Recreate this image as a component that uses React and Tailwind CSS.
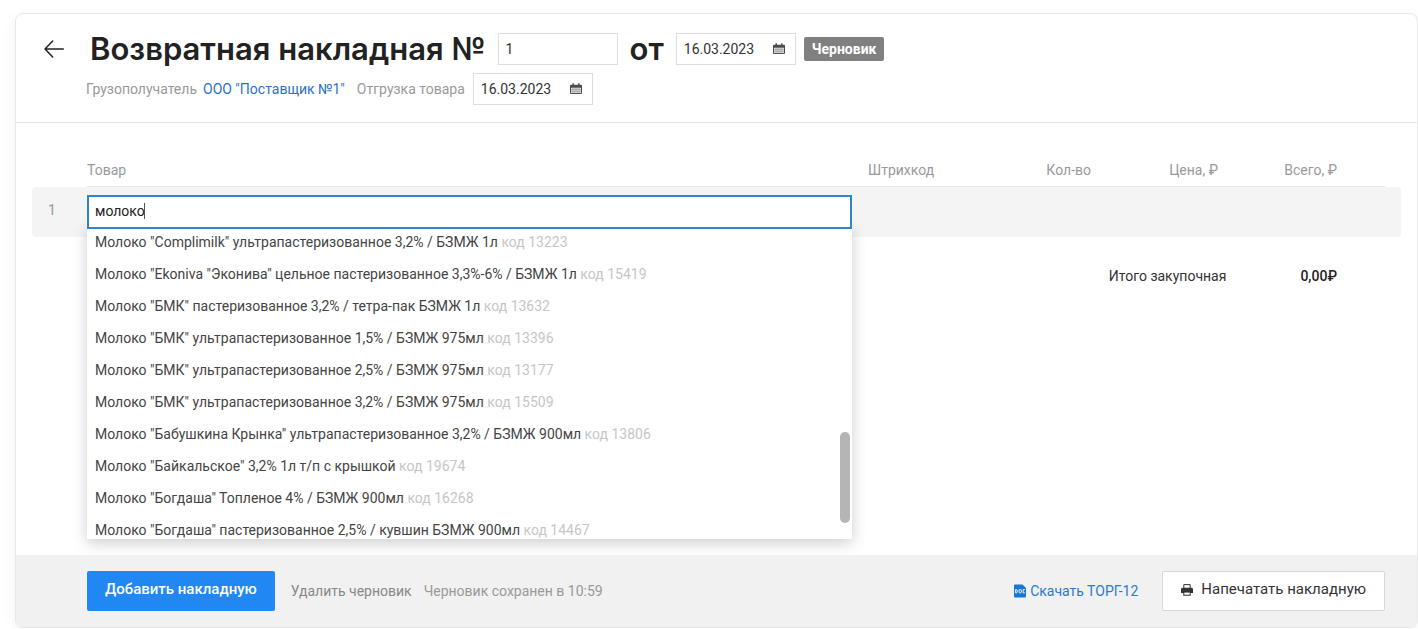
import { useState } from 'react';

const PRODUCTS = [
  ['Молоко "Complimilk" ультрапастеризованное 3,2% / БЗМЖ 1л', 13223],
  ['Молоко "Ekoniva "Эконива" цельное пастеризованное 3,3%-6% / БЗМЖ 1л', 15419],
  ['Молоко "БМК" пастеризованное 3,2% / тетра-пак БЗМЖ 1л', 13632],
  ['Молоко "БМК" ультрапастеризованное 1,5% / БЗМЖ 975мл', 13396],
  ['Молоко "БМК" ультрапастеризованное 2,5% / БЗМЖ 975мл', 13177],
  ['Молоко "БМК" ультрапастеризованное 3,2% / БЗМЖ 975мл', 15509],
  ['Молоко "Бабушкина Крынка" ультрапастеризованное 3,2% / БЗМЖ 900мл', 13806],
  ['Молоко "Байкальское" 3,2% 1л т/п с крышкой', 19674],
  ['Молоко "Богдаша" Топленое 4% / БЗМЖ 900мл', 16268],
  ['Молоко "Богдаша" пастеризованное 2,5% / кувшин БЗМЖ 900мл', 14467],
];

function ArrowIcon() {
  return (
    <svg className="h-5 w-5" viewBox="0 0 20 20" fill="none" stroke="#222" strokeWidth="1.5" strokeLinecap="round" strokeLinejoin="round" aria-hidden="true">
      <path d="M19.3 10H1M8.700 2L1 10l7.700 8" />
    </svg>
  );
}

function CalendarIcon() {
  return (
    <svg className="h-3 w-3 shrink-0" viewBox="0 0 12 12" aria-hidden="true">
      <path fill="#4a4a4a" d="M1 1.800h1.500V.2h1.400v1.600h4.200V.2h1.400v1.600H11a1 1 0 0 1 1 1V10a1 1 0 0 1-1 1H1a1 1 0 0 1-1-1V2.800a1 1 0 0 1 1-1Z" />
      <path fill="#e0e0e0" d="M1 4.700h10v5.400H1z" />
      <path stroke="#888" strokeWidth=".5" d="M1 6.500h10M1 8.300h10M3 4.700v5.400M5 4.700v5.400M7 4.700v5.400M9 4.700v5.400" />
    </svg>
  );
}

function DocIcon() {
  return (
    <svg className="h-3.5 w-3" viewBox="0 0 12 14" aria-hidden="true">
      <path fill="#1b76d2" d="M1 .5h7.500L12 4v8.500a1 1 0 0 1-1 1H1a1 1 0 0 1-1-1v-11a1 1 0 0 1 1-1Z" />
      <g fill="none" stroke="#fff" strokeWidth=".9">
        <path d="M1.600 5.500h.6q1.100 0 1.100 1.700t-1.100 1.700h-.6zM10.900 5.500H9.200v3.400h1.700" />
        <rect x="5.100" y="5.500" width="2.200" height="3.400" rx=".6" />
      </g>
    </svg>
  );
}

function PrinterIcon() {
  return (
    <svg className="h-3 w-3" viewBox="0 0 12 12" aria-hidden="true">
      <path fill="none" stroke="#333" strokeWidth="1" d="M2.800 4V.6h6.400V4" />
      <path fill="#333" d="M1.500 3.800h9A1.500 1.500 0 0 1 12 5.300V9H9.700v2.700H2.300V9H0V5.300a1.500 1.500 0 0 1 1.500-1.500Z" />
      <path fill="#fff" d="M3.300 8.600h5.400v2.100H3.300z" />
    </svg>
  );
}

function DateField({ label }) {
  const [value, setValue] = useState('16.03.2023');
  return (
    <label className="flex h-8 w-30 shrink-0 items-center border border-[#dedede] bg-white pr-2.5 pl-[7px]">
      <input
        aria-label={label}
        value={value}
        onChange={(e) => setValue(e.target.value)}
        className="min-w-0 flex-1 text-sm text-[#333] outline-none"
      />
      <CalendarIcon />
    </label>
  );
}

function ProductSearch() {
  const [query, setQuery] = useState('молоко');
  return (
    <div className="relative">
      <input
        aria-label="Товар"
        value={query}
        onChange={(e) => setQuery(e.target.value)}
        className="relative z-20 block h-[34px] w-full border-2 border-[#2e86c9] bg-white px-1.5 pb-0.5 text-sm text-[#222] outline-none"
      />
      {query === 'молоко' && <span className="absolute top-2 left-[57px] z-30 h-4 w-px bg-[#555]" />}
      <div className="absolute top-full right-0 left-0 z-10 -mt-[3px] h-[313px] overflow-hidden bg-white shadow-[0_4px_14px_rgba(0,0,0,0.2)]">
        <ul>
          {PRODUCTS.map(([name, code]) => (
            <li key={code} className="h-8 px-2 text-sm leading-8 whitespace-nowrap text-[#444]">
              {name} <span className="text-[#c6c6c6]">код {code}</span>
            </li>
          ))}
        </ul>
        <div className="absolute right-0.5 bottom-4 h-[91px] w-2.5 rounded-full bg-[#b5b5b5]" />
      </div>
    </div>
  );
}

export default function App() {
  const [number, setNumber] = useState('1');
  const head = 'h-[33px] pb-0 text-sm font-normal text-[#999] border-b border-[#e6e6e6] align-middle';
  return (
    <div className="bg-white pt-[13px] pl-[15px] font-['Roboto','Liberation_Sans',sans-serif] text-sm text-[#333]">
      <main className="rounded-lg border border-[#e8e8e8] bg-white shadow-[0_4px_16px_rgba(0,0,0,0.05)]">
        <header className="border-b border-[#e8e8e8] pt-[19px] pb-[17px] pl-7">
          <div className="flex h-8 items-center">
            <button type="button" aria-label="Назад" className="mr-[26px]">
              <ArrowIcon />
            </button>
            <h1 className="mr-3 font-['Inter',sans-serif] text-[31px] leading-8 font-semibold whitespace-nowrap text-[#222]">Возвратная накладная №</h1>
            <input
              aria-label="Номер накладной"
              value={number}
              onChange={(e) => setNumber(e.target.value)}
              className="h-8 w-30 border border-[#dedede] px-[7px] text-sm text-[#333] outline-none"
            />
            <span className="mx-3 font-['Inter',sans-serif] text-[31px] leading-8 font-semibold text-[#222]">от</span>
            <DateField label="Дата накладной" />
            <span className="ml-2 h-6 rounded-xs bg-[#808080] px-2 text-sm leading-6 font-bold text-white">Черновик</span>
          </div>
          <div className="mt-2 flex h-8 items-center pl-[42px] whitespace-nowrap">
            <span className="text-[#999]">Грузополучатель</span>
            <a href="#supplier" className="ml-1.5 text-[#2a72cc]">ООО "Поставщик №1"</a>
            <span className="mr-2 ml-3 text-[#999]">Отгрузка товара</span>
            <DateField label="Отгрузка товара" />
          </div>
        </header>

        <section className="h-[432px] px-4 pt-[31px]">
          <table className="w-full table-fixed border-separate border-spacing-0">
            <colgroup>
              <col className="w-[55px]" />
              <col />
              <col className="w-[126px]" />
              <col className="w-[97px]" />
              <col className="w-[127px]" />
              <col className="w-[119px]" />
              <col className="w-12" />
              <col className="w-4" />
            </colgroup>
            <thead>
              <tr>
                <td />
                <th scope="col" className={head + ' text-left'}>Товар</th>
                <th scope="col" className={head + ' text-left'}>Штрихкод</th>
                <th scope="col" className={head + ' text-right'}>Кол-во</th>
                <th scope="col" className={head + ' text-right'}>Цена, ₽</th>
                <th scope="col" className={head + ' text-right'}>Всего, ₽</th>
                <td className={head} />
                <td />
              </tr>
            </thead>
            <tbody>
              <tr className="h-[50px]">
                <td className="rounded-l bg-[#f4f4f4] pb-1 pl-4 text-[#999]">1</td>
                <td className="bg-[#f4f4f4] pr-4 align-middle">
                  <ProductSearch />
                </td>
                <td colSpan={6} className="rounded-r bg-[#f4f4f4]" />
              </tr>
            </tbody>
            <tfoot>
              <tr className="h-[78px]">
                <td colSpan={4} />
                <td colSpan={2}>
                  <div className="flex justify-end gap-[74px] whitespace-nowrap">
                    <span>Итого закупочная</span>
                    <b className="font-medium text-[#222]">0,00₽</b>
                  </div>
                </td>
                <td colSpan={2} />
              </tr>
            </tfoot>
          </table>
        </section>

        <footer className="flex h-[72px] items-center rounded-b-lg bg-[#f1f1f1] pr-8 pl-[71px] whitespace-nowrap">
          <button type="button" className="h-10 rounded-xs bg-[#2188f3] px-[18px] pb-0.5 text-[15px] font-medium text-white">Добавить накладную</button>
          <button type="button" className="ml-4 text-[#888]">Удалить черновик</button>
          <span className="ml-3 text-[#999]">Черновик сохранен в 10:59</span>
          <a href="#torg-12" className="mr-6 ml-auto flex items-center gap-1 text-[#2a7bd0]">
            <DocIcon />
            Скачать ТОРГ-12
          </a>
          <button type="button" className="flex h-10 items-center gap-2 rounded-xs border border-[#d8d8d8] bg-white px-[18px] pb-0.5 text-[15px] text-[#333]">
            <PrinterIcon />
            Напечатать накладную
          </button>
        </footer>
      </main>
    </div>
  );
}
